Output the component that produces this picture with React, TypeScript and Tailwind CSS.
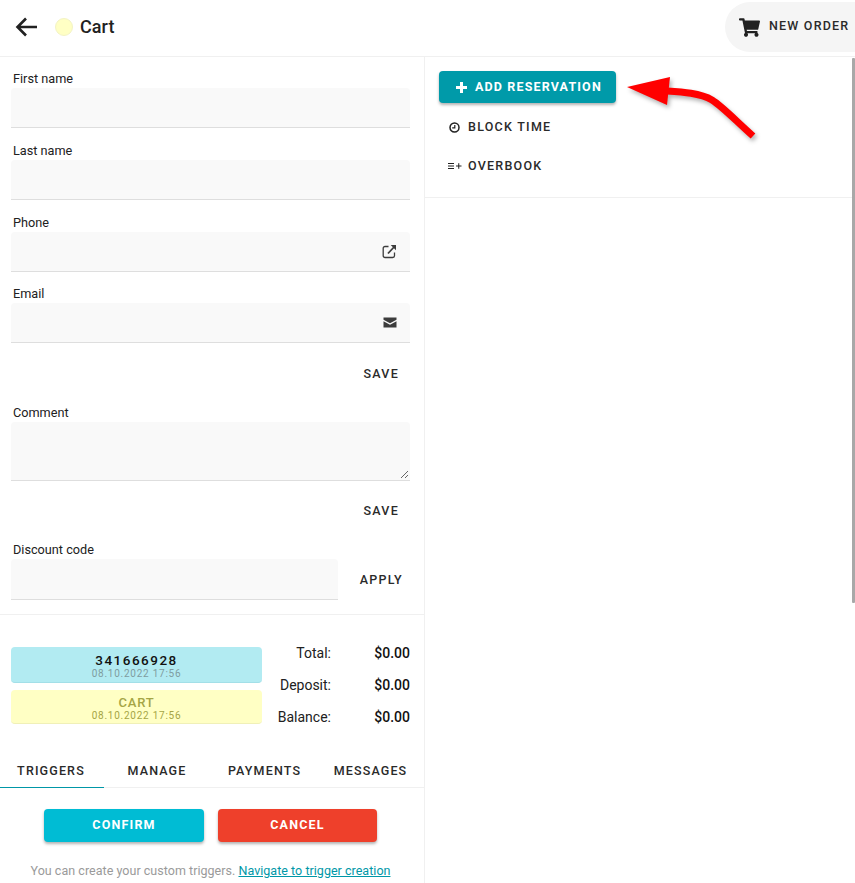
import { FaShoppingCart } from "react-icons/fa"

function Label({ children, className = "" }: { children: React.ReactNode; className?: string }) {
  return <div className={`h-[16px] pl-[2px] text-[12.7px] leading-[16px] text-[#212121] ${className}`}>{children}</div>
}

function Field({ label, icon, mt }: { label: string; icon?: React.ReactNode; mt: string }) {
  return (
    <div className={mt}>
      <Label>{label}</Label>
      <div className="mt-[1px] flex h-[40px] items-center justify-end rounded-t-[4px] border-b border-[#dedede] bg-[#f9f9f9] pr-[13px] text-[#3c3c3c]">
        {icon}
      </div>
    </div>
  )
}

function TextButton({ children, className = "" }: { children: React.ReactNode; className?: string }) {
  return <div className={`text-[12.5px] font-medium leading-[16px] tracking-[1.25px] text-[#2a2a2a] ${className}`}>{children}</div>
}

function Total({ label, value }: { label: string; value: string }) {
  return (
    <div className="flex h-[32px] items-center justify-end text-[14px]">
      <span className="text-[#212121]">{label}</span>
      <span className="w-[79px] text-right font-medium text-[#111]">{value}</span>
    </div>
  )
}

const tabs = [
  { name: "TRIGGERS", width: "w-[102px]" },
  { name: "MANAGE", width: "w-[110px]" },
  { name: "PAYMENTS", width: "w-[105px]" },
  { name: "MESSAGES", width: "w-[107px]" },
]

export default function App() {
  return (
    <div className="relative h-[883px] w-[855px] overflow-hidden bg-white font-['Roboto',sans-serif]">
      <header className="flex h-[57px] items-center justify-between border-b border-[#f0f0f0]">
        <div className="mb-[3px] flex items-center">
          <svg className="ml-[15px]" width="23" height="20" viewBox="0 0 23 20" fill="none" stroke="#212121" strokeWidth="2.6">
            <path d="M22 10H3M11 1.5 2.5 10l8.5 8.5" />
          </svg>
          <div className="ml-[17px] h-[18px] w-[18px] rounded-full border border-[#f3f3c4] bg-[#ffffc4]" />
          <span className="ml-[7px] text-[18px] font-medium tracking-[0.05px] text-[#212121]">Cart</span>
        </div>
        <div className="mb-[3px] flex h-[50px] w-[130px] items-center rounded-l-[25px] bg-[#f5f5f5] pl-[14px]">
          <FaShoppingCart className="mt-[2px] text-[#212121]" size={21} />
          <span className="ml-[9px] text-[12.5px] font-medium tracking-[1.2px] text-[#2a2a2a]">NEW ORDER</span>
        </div>
      </header>

      <div className="flex h-[826px]">
        <aside className="w-[425px] border-r border-[#f0f0f0]">
          <div className="pl-[11px] pr-[14px]">
            <Field label="First name" mt="mt-[14px]" />
            <Field label="Last name" mt="mt-[15px]" />
            <Field
              label="Phone"
              mt="mt-[15px]"
              icon={
                <svg width="15" height="15" viewBox="0 0 15 15" fill="none" stroke="currentColor">
                  <path d="M12.5 8.5v3.2a1.8 1.8 0 0 1-1.8 1.8H3a1.8 1.8 0 0 1-1.8-1.8V4.3A1.8 1.8 0 0 1 3 2.5h3.5" strokeWidth="1.3" />
                  <path d="M6 9.5 12.5 2.5" strokeWidth="1.8" />
                  <path d="M8.7 1H14v5.3z" fill="currentColor" stroke="none" />
                </svg>
              }
            />
            <Field
              label="Email"
              mt="mt-[14px]"
              icon={
                <svg width="14" height="11" viewBox="0 0 14 11">
                  <path d="M0.5 0.5h13v2.2L7 6.2 0.5 2.7zM0.5 4.2 7 7.7l6.5-3.5v6.3h-13z" fill="currentColor" />
                </svg>
              }
            />
            <TextButton className="mt-[23px] pr-[11px] text-right">SAVE</TextButton>
            <Label className="mt-[23px]">Comment</Label>
            <div className="relative mt-[1px] h-[59px] rounded-t-[4px] border-b border-[#dedede] bg-[#f9f9f9]">
              <svg className="absolute bottom-[1px] right-[1px]" width="9" height="9" viewBox="0 0 9 9">
                <path d="M8 1 1 8M8 5 5 8" stroke="#666" fill="none" />
              </svg>
            </div>
            <TextButton className="mt-[22px] pr-[11px] text-right">SAVE</TextButton>
            <Label className="mt-[23px]">Discount code</Label>
            <div className="mt-[1px] flex items-center justify-between">
              <div className="h-[41px] w-[327px] rounded-t-[4px] border-b border-[#dedede] bg-[#f9f9f9]" />
              <TextButton className="pr-[7px]">APPLY</TextButton>
            </div>
          </div>

          <div className="mt-[14px] flex border-t border-[#f0f0f0] pl-[11px] pr-[14px] pt-[22px]">
            <div className="mt-[10px] w-[251px]">
              <div className="flex h-[36px] flex-col items-center rounded-[4px] border-b border-[#a3dfe8] bg-[#b2ebf2] pt-[6px]">
                <span className="text-[13.5px] font-medium leading-[15px] tracking-[1.5px] text-[#111]">341666928</span>
                <span className="text-[10px] leading-[12px] tracking-[0.75px] text-[#7f9ca0]">08.10.2022 17:56</span>
              </div>
              <div className="mt-[7px] flex h-[34px] flex-col items-center rounded-[4px] border-b border-[#f0f0b8] bg-[#ffffc4] pt-[5px]">
                <span className="text-[13px] font-medium leading-[15px] tracking-[0.8px] text-[#a5a545]">CART</span>
                <span className="mt-[1px] text-[10px] leading-[10px] tracking-[0.75px] text-[#a5a545]">08.10.2022 17:56</span>
              </div>
            </div>
            <div className="flex-1">
              <Total label="Total:" value="$0.00" />
              <Total label="Deposit:" value="$0.00" />
              <Total label="Balance:" value="$0.00" />
            </div>
          </div>

          <div className="relative mt-[22px] flex h-[33px] border-b border-[#f0f0f0]">
            {tabs.map((t) => (
              <div key={t.name} className={`flex items-center justify-center text-[12.5px] font-medium tracking-[1.15px] text-[#2a2a2a] ${t.width}`}>
                {t.name}
              </div>
            ))}
            <div className="absolute bottom-[-1px] left-0 h-[1px] w-[104px] bg-[#0097a7]" />
          </div>

          <div className="mt-[21px] flex justify-center gap-[14px] pr-[3px]">
            <div className="flex h-[33px] w-[160px] items-center justify-center rounded-[4px] bg-[#00bcd4] text-[12.5px] font-bold tracking-[1.2px] text-white shadow-[0_2px_3px_rgba(0,0,0,0.3)]">
              CONFIRM
            </div>
            <div className="flex h-[33px] w-[159px] items-center justify-center rounded-[4px] bg-[#ee402b] text-[12.5px] font-bold tracking-[1.2px] text-white shadow-[0_2px_3px_rgba(0,0,0,0.3)]">
              CANCEL
            </div>
          </div>
          <p className="mt-[21px] pr-[3px] text-center text-[12.5px] leading-[16px] tracking-[0.03px] text-[#9a9a9a]">
            You can create your custom triggers.{" "}
            <span className="text-[#0097a7] underline">Navigate to trigger creation</span>
          </p>
        </aside>

        <main className="flex-1">
          <div className="h-[141px] border-b border-[#f0f0f0] pl-[14px] pt-[14px]">
            <div className="flex h-[32px] w-[177px] items-center rounded-[4px] bg-[#009aa9] pl-[17px] text-[12.5px] font-bold tracking-[1.15px] text-white shadow-[0_2px_3px_rgba(0,0,0,0.3)]">
              <svg width="11" height="11" viewBox="0 0 11 11">
                <path d="M4 0h3v4h4v3H7v4H4V7H0V4h4z" fill="currentColor" />
              </svg>
              <span className="ml-[8px]">ADD RESERVATION</span>
            </div>
            <div className="mt-[16px] flex h-[16px] items-center pl-[10px]">
              <svg width="11" height="11" viewBox="0 0 11 11" fill="none" stroke="#212121">
                <circle cx="5.5" cy="5.5" r="4.5" strokeWidth="1.5" />
                <path d="M5.8 3v2.8H3.2" strokeWidth="1.2" />
              </svg>
              <TextButton className="ml-[8px]">BLOCK TIME</TextButton>
            </div>
            <div className="mt-[23px] flex h-[16px] items-center pl-[9px]">
              <svg width="14" height="8" viewBox="0 0 14 8" fill="none" stroke="#212121">
                <path d="M0 1.5h6M0 4h6M0 6.5h6M8 4h5.5M10.75 1.2v5.6" strokeWidth="1" />
              </svg>
              <TextButton className="ml-[6px]">OVERBOOK</TextButton>
            </div>
          </div>
        </main>
      </div>

      {/* annotation arrow */}
      <svg className="absolute left-[620px] top-[70px] overflow-visible" width="145" height="75" viewBox="0 0 145 75" fill="none">
        <g style={{ filter: "drop-shadow(2px 3px 2px rgba(0,0,0,0.3))" }}>
          <path d="M7 17 L50 7 L47 35 Z" fill="#ff0000" />
          <path d="M46 21 C62 22 80 23 92 30 C103 37 115 50 133 66" stroke="#ff0000" strokeWidth="7" />
        </g>
      </svg>

      <div className="absolute right-0 top-[58px] h-[545px] w-[3px] rounded-[1px] bg-[#a8a8a8]" />
    </div>
  )
}
